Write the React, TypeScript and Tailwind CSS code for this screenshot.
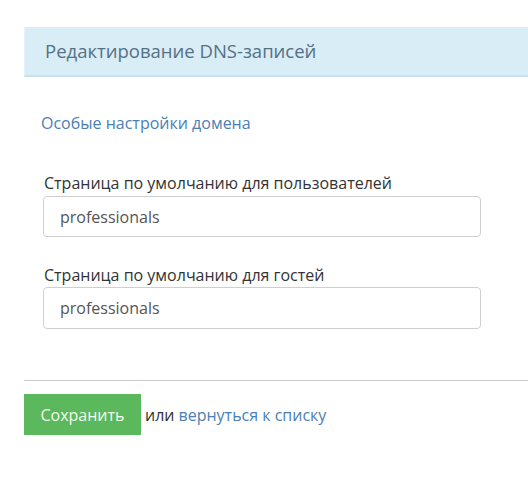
import React from "react";

export default function App() {
  return (
    <div className="w-[528px] h-[493px] bg-white overflow-hidden pl-[24px] pt-[27px]" style={{ fontFamily: "'Open Sans', sans-serif" }}>
      <div className="h-[50px] bg-[#d9edf7] border-l border-l-[#e4f2f9] border-b-2 border-b-[#c7e3ee] flex items-center pl-[20px]">
        <span className="text-[18.5px] text-[#557184]">Редактирование DNS-записей</span>
      </div>
      <div className="pl-[17px] pt-[36px]">
        <a className="text-[16px] text-[#4a80b4] leading-[20px] block">Особые настройки домена</a>
      </div>
      <div className="pl-[19px] pt-[40px] w-[457px]">
        <div className="text-[16px] text-[#333] leading-[20px] mb-[3px] pl-[1px]">Страница по умолчанию для пользователей</div>
        <div className="h-[41px] border border-[#cfcfcf] rounded-[4px] flex items-center pl-[16px] text-[16px] text-[#555]">professionals</div>
        <div className="text-[16px] text-[#333] leading-[20px] mt-[28px] mb-[2px] pl-[1px]">Страница по умолчанию для гостей</div>
        <div className="h-[42px] border border-[#cfcfcf] rounded-[4px] flex items-center pl-[16px] text-[16px] text-[#555]">professionals</div>
      </div>
      <div className="mt-[51px] border-t border-[#cccccc]"></div>
      <div className="mt-[13px] flex items-center">
        <div className="w-[117px] h-[41px] bg-[#5cb85c] text-[#f2fbef] text-[16px] flex items-center justify-center">Сохранить</div>
        <span className="ml-[4px] text-[16px] text-[#333]">или </span>
        <a className="ml-[4px] text-[16px] text-[#4a80b4]">вернуться к списку</a>
      </div>
    </div>
  );
}
